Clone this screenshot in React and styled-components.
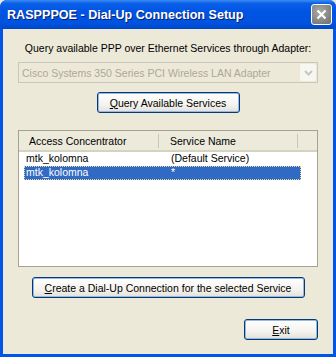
import React from "react";
import styled, { createGlobalStyle } from "styled-components";

const Global = createGlobalStyle`
  html, body { margin: 0; padding: 0; background: #ece9d8; }
  body { font-family: "Liberation Sans", Arial, sans-serif; font-size: 10.5px; }
`;

const Window = styled.div`
  width: 336px;
  height: 357px;
  box-sizing: border-box;
  display: flex;
  flex-direction: column;
  background: #0055ea;
  padding: 0 3px 3px 3px;
  border-radius: 7px 7px 0 0;
`;

const TitleBar = styled.div`
  height: 29px;
  display: flex;
  align-items: center;
  justify-content: space-between;
  margin: 0 -3px;
  padding: 0 4px 0 7px;
  border-radius: 7px 7px 0 0;
  background: linear-gradient(#3c8cf3 0%, #0a5fe8 12%, #0054e3 40%, #0053e0 80%, #0047c6 100%);
`;

const Title = styled.span`
  color: #fff;
  font-family: "Liberation Sans", Arial, sans-serif;
  font-weight: bold;
  font-size: 12.6px;
  text-shadow: 1px 1px 0 #0a1e6e;
`;

const CloseButton = styled.div`
  width: 19px;
  height: 19px;
  border: 1px solid #fff;
  border-radius: 3px;
  background: radial-gradient(circle at 40% 35%, #a9a9a9, #6e6e6e);
  display: flex;
  align-items: center;
  justify-content: center;
`;

const Content = styled.div`
  flex: 1;
  background: #ece9d8;
  display: flex;
  flex-direction: column;
  padding: 0 15px;
`;

const Label = styled.div`
  margin-top: 12px;
  height: 14px;
  line-height: 14px;
  text-align: center;
  color: #000;
`;

const Combo = styled.div`
  margin-top: 7px;
  height: 21px;
  box-sizing: border-box;
  border: 1px solid #c9c7ba;
  display: flex;
  align-items: center;
  justify-content: space-between;
  padding: 0 1px 0 3px;
  color: #aca899;
`;

const ComboArrow = styled.div`
  width: 16px;
  height: 17px;
  background: #f7f7f1;
  border-radius: 2px;
  display: flex;
  align-items: center;
  justify-content: center;
`;

const Button = styled.button`
  font-family: "Liberation Sans", Arial, sans-serif;
  font-size: 10.5px;
  color: #000;
  height: 21px;
  padding: 0;
  box-sizing: border-box;
  border: 1px solid #003c74;
  border-radius: 3px;
  background: linear-gradient(#ffffff 0%, #f4f3ee 60%, #e3e1d8 100%);
  box-shadow: inset 0 0 0 1px #9ab6e6;
  width: ${(p) => p.$w}px;
  align-self: ${(p) => p.$align || "center"};
  margin-top: ${(p) => p.$mt}px;
  u { text-decoration: underline; }
`;

const List = styled.div`
  margin-top: 17px;
  height: 137px;
  box-sizing: border-box;
  border: 1px solid #a5a293;
  background: #fff;
  display: flex;
  flex-direction: column;
`;

const Header = styled.div`
  height: 19px;
  display: flex;
  align-items: center;
  background: #ebeadb;
  border-bottom: 2px solid #d6d2c2;
`;

const HeaderCell = styled.div`
  width: ${(p) => p.$w}px;
  box-sizing: border-box;
  padding-left: ${(p) => p.$pl}px;
  height: 14px;
  line-height: 14px;
  border-right: 1px solid #cbc7b8;
`;

const Row = styled.div`
  display: flex;
  height: 14px;
  line-height: 13px;
  margin-left: 5px;
  width: 277px;
  box-sizing: border-box;
  color: ${(p) => (p.$sel ? "#fff" : "#000")};
  background: ${(p) => (p.$sel ? "#316ac5" : "transparent")};
  outline: ${(p) => (p.$sel ? "1px dotted #e8d889" : "none")};
  outline-offset: -1px;
`;

const Cell = styled.div`
  width: ${(p) => p.$w}px;
  padding-left: 2px;
  box-sizing: border-box;
`;

export default function App() {
  return (
    <>
      <Global />
      <Window>
        <TitleBar>
          <Title>RASPPPOE - Dial-Up Connection Setup</Title>
          <CloseButton>
            <svg width="11" height="11" viewBox="0 0 11 11">
              <path d="M1.5 1.5 L9.5 9.5 M9.5 1.5 L1.5 9.5" stroke="#fff" strokeWidth="2.2" />
            </svg>
          </CloseButton>
        </TitleBar>
        <Content>
          <Label>Query available PPP over Ethernet Services through Adapter:</Label>
          <Combo>
            <span>Cisco Systems 350 Series PCI Wireless LAN Adapter</span>
            <ComboArrow>
              <svg width="9" height="6" viewBox="0 0 9 6">
                <path d="M1 1 L4.5 4.5 L8 1" stroke="#c9c7ba" strokeWidth="2" fill="none" />
              </svg>
            </ComboArrow>
          </Combo>
          <Button $w={143} $mt={9}>
            <u>Q</u>uery Available Services
          </Button>
          <List>
            <Header>
              <HeaderCell $w={140} $pl={10}>Access Concentrator</HeaderCell>
              <HeaderCell $w={139} $pl={11}>Service Name</HeaderCell>
            </Header>
            <Row>
              <Cell $w={145}>mtk_kolomna</Cell>
              <Cell $w={132}>(Default Service)</Cell>
            </Row>
            <Row $sel>
              <Cell $w={145}>mtk_kolomna</Cell>
              <Cell $w={132}>*</Cell>
            </Row>
          </List>
          <Button $w={273} $mt={10}>
            <u>C</u>reate a Dial-Up Connection for the selected Service
          </Button>
          <Button $w={74} $mt={21} $align="flex-end">
            <u>E</u>xit
          </Button>
        </Content>
      </Window>
    </>
  );
}
